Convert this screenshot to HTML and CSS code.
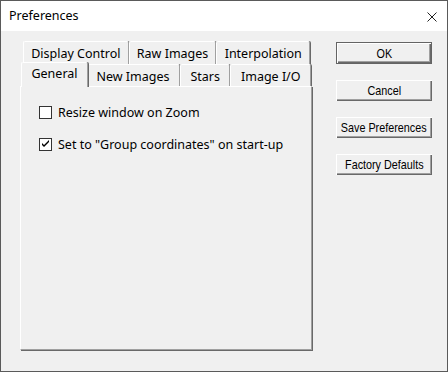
FILE: index.html
```html
<!DOCTYPE html>
<html>
<head>
<meta charset="utf-8">
<link rel="stylesheet" href="styles.css">
</head>
<body>
<div class="window">
  <div class="titlebar">
    <span class="title">Preferences</span>
    <svg class="close" width="10" height="10" viewBox="0 0 10 10"><path d="M0.5 0.5 L9.5 9.5 M9.5 0.5 L0.5 9.5" stroke="#222" stroke-width="1" fill="none"/></svg>
  </div>
  <div class="client">
    <div class="tabctl">
      <div class="tabrow row1">
        <div class="tab">Display Control</div>
        <div class="tab">Raw Images</div>
        <div class="tab">Interpolation</div>
      </div>
      <div class="tabrow row2">
        <div class="tab selected">General</div>
        <div class="tab">New Images</div>
        <div class="tab">Stars</div>
        <div class="tab">Image I/O</div>
      </div>
      <div class="panel">
        <label class="check"><span class="box"></span><span>Resize window on Zoom</span></label>
        <label class="check"><span class="box"><svg width="11" height="11" viewBox="0 0 11 11"><path d="M2 4 L2 6 L4 8 L9 3 L9 1 L4 6 Z" fill="#000"/></svg></span><span>Set to "Group coordinates" on start-up</span></label>
      </div>
    </div>
    <div class="buttons">
      <button class="btn default"><span class="lbl">OK</span></button>
      <button class="btn"><span class="lbl">Cancel</span></button>
      <button class="btn"><span class="lbl">Save Preferences</span></button>
      <button class="btn"><span class="lbl">Factory Defaults</span></button>
    </div>
  </div>
</div>
</body>
</html>
```
FILE: styles.css
```css
html, body {
  margin: 0;
  padding: 0;
}
body {
  font-family: "Noto Sans", "Open Sans", sans-serif;
  font-size: 12.5px;
  color: #000;
}
.window {
  width: 448px;
  height: 372px;
  box-sizing: border-box;
  border: 1px solid #5a5a5a;
  background: #f0f0f0;
  display: flex;
  flex-direction: column;
}
.titlebar {
  height: 30px;
  background: #fff;
  display: flex;
  align-items: center;
  justify-content: space-between;
  padding: 0 10px 0 8px;
  flex: none;
}
.title {
  font-size: 12.5px;
  line-height: 16px;
  margin-top: -1px;
}
.close {
  display: block;
  margin-top: 1px;
}
.client {
  flex: 1;
  display: flex;
  padding: 10px 0 0 19px;
}
.tabctl {
  width: 293px;
  height: 310px;
  display: flex;
  flex-direction: column;
}
.tabrow {
  display: flex;
  padding-left: 3px;
}
.row1 {
  height: 23px;
  padding-right: 3px;
}
.row2 {
  height: 22px;
  padding-right: 2px;
}
.tab {
  flex: 1 1 auto;
  box-sizing: border-box;
  padding: 0 5px;
  border-top: 1px solid #fff;
  border-left: 1px solid #fff;
  border-right: 1px solid #a0a0a0;
  box-shadow: 1px 0 0 #696969;
  border-radius: 2px 2px 0 0;
  background: #f0f0f0;
  display: flex;
  align-items: center;
  justify-content: center;
  white-space: nowrap;
  padding-top: 1px;
}
.tab.selected {
  position: relative;
  z-index: 2;
  top: -2px;
  height: 25px;
  margin: 0 -2px 0 -2px;
  padding-bottom: 4px;
}
.panel {
  flex: 1;
  box-sizing: border-box;
  border-top: 1px solid #fff;
  border-left: 1px solid #fff;
  border-right: 1px solid #a0a0a0;
  border-bottom: 1px solid #a0a0a0;
  box-shadow: 1px 1px 0 #696969;
  margin-right: 1px;
  margin-bottom: 1px;
  padding: 17px 0 0 18px;
  display: flex;
  flex-direction: column;
  gap: 15px;
}
.check {
  display: flex;
  align-items: center;
  gap: 6px;
  height: 17px;
}
.box {
  width: 13px;
  height: 13px;
  box-sizing: border-box;
  border: 1px solid #333;
  background: #fff;
  display: flex;
  align-items: center;
  justify-content: center;
}
.box svg {
  display: block;
}
.buttons {
  margin-left: 23px;
  margin-top: 1px;
  display: flex;
  flex-direction: column;
  gap: 16px;
}
.btn {
  width: 96px;
  height: 21px;
  margin: 0;
  padding: 0;
  border: none;
  background: #f0f0f0;
  font-family: "Liberation Sans", Arial, sans-serif;
  font-size: 13px;
  color: #000;
  box-shadow: inset 1px 1px 0 #fff, inset -1px -1px 0 #696969, inset -2px -2px 0 #a0a0a0;
  display: flex;
  align-items: center;
  justify-content: center;
  white-space: nowrap;
}
.lbl {
  display: inline-block;
  transform: scaleX(0.83);
}
.btn.default {
  height: 22px;
  border: 1px solid #646464;
  box-shadow: inset 1px 1px 0 #fff, inset -1px -1px 0 #696969, inset -2px -2px 0 #a0a0a0;
}
```
